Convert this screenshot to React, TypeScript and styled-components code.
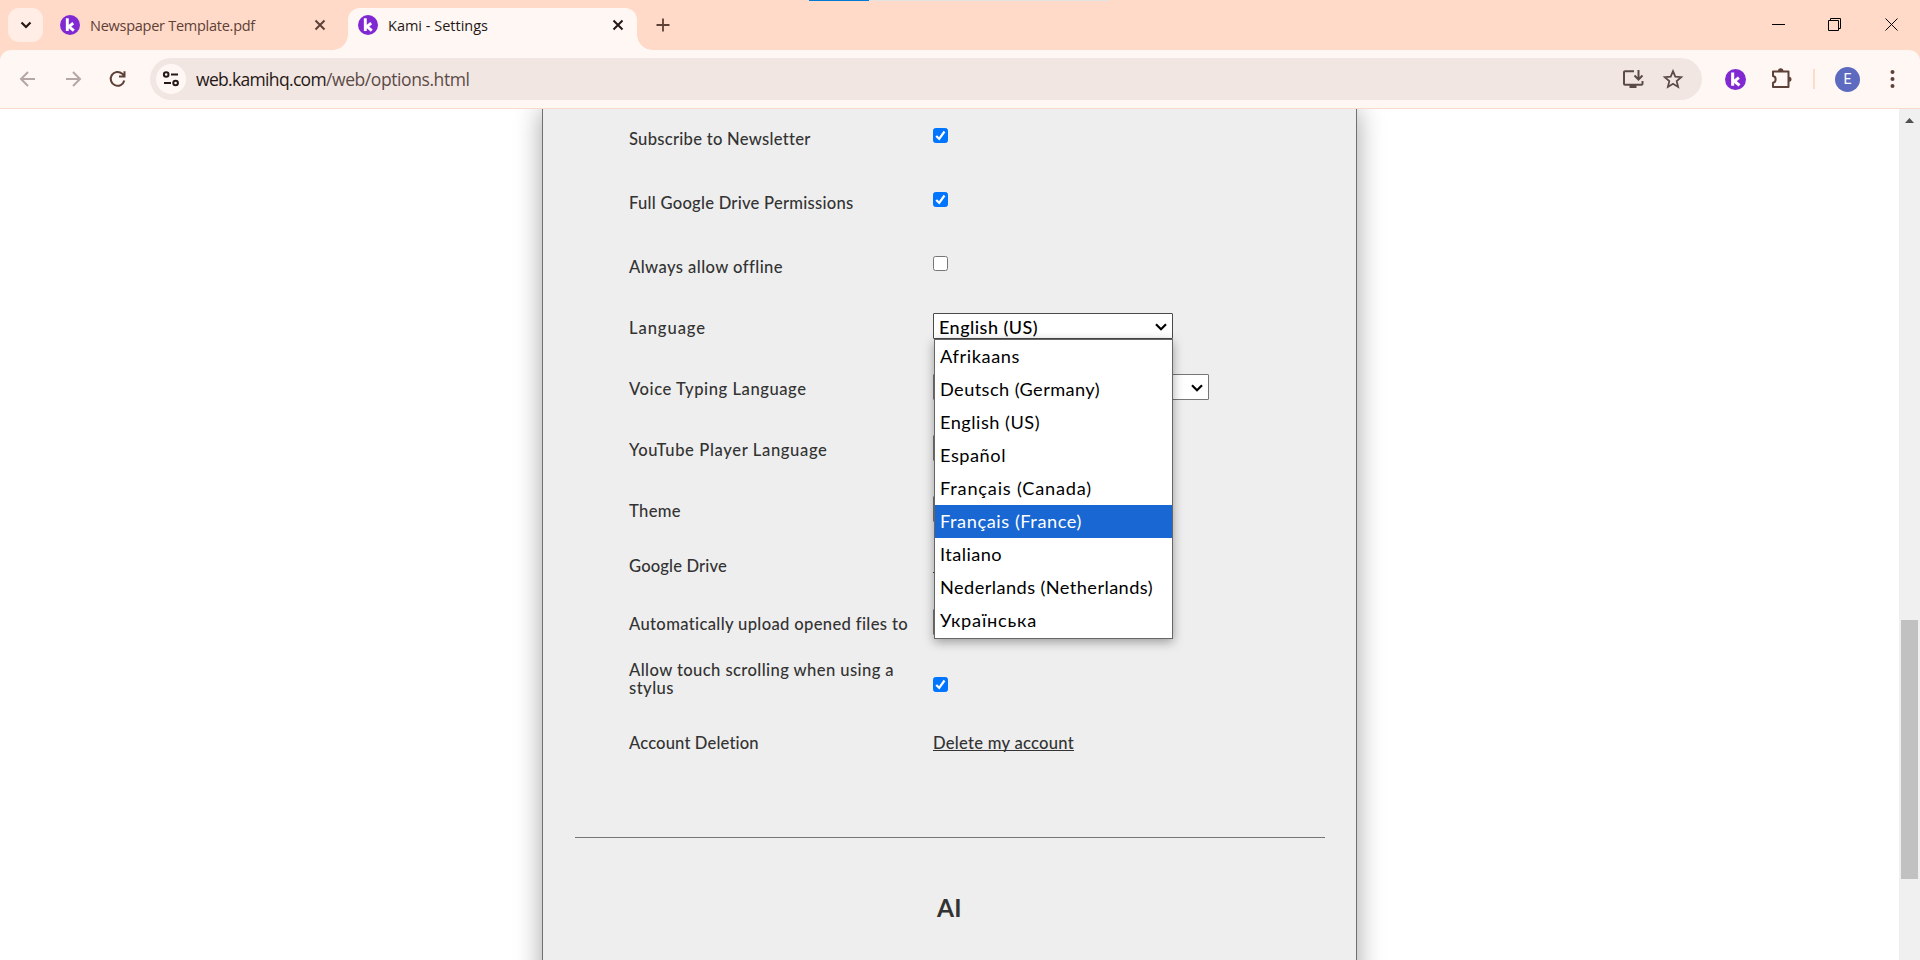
import React, { useLayoutEffect, useRef } from "react";
import styled, { createGlobalStyle, css } from "styled-components";

const uiFont = `"Open Sans", "Noto Sans", sans-serif`;
const pageFont = `Lato, "Open Sans", sans-serif`;

const GlobalStyle = createGlobalStyle`
  * { box-sizing: border-box; }
  body { margin: 0; background: #fff; overflow: hidden; }
  svg { display: block; flex: none; }
`;

const Text = styled.span`
  display: inline-block;
  white-space: pre;
`;

/* Tracks a line of text so that it fills the given width. */
function Fit({ width, children }: { width: number; children: string }) {
  const ref = useRef<HTMLSpanElement>(null);
  useLayoutEffect(() => {
    const apply = () => {
      const el = ref.current;
      if (!el) return;
      el.style.letterSpacing = "0px";
      const natural = el.getBoundingClientRect().width;
      el.style.letterSpacing = `${(width - natural) / children.length}px`;
    };
    apply();
    document.fonts?.ready.then(apply);
  }, [width, children]);
  return <Text ref={ref}>{children}</Text>;
}

const Window = styled.div`
  width: 1920px;
  height: 960px;
  display: flex;
  flex-direction: column;
  overflow: hidden;
  position: relative;
  background: #ffdac8;
`;

const LoadingBar = styled.div`
  position: absolute;
  top: 0;
  left: 809px;
  width: 300px;
  height: 1px;
  background: linear-gradient(to right, #0078d4 60px, #e3e3e3 60px);
`;

const TabStrip = styled.header`
  height: 50px;
  flex: none;
  display: flex;
  align-items: flex-end;
  padding-left: 8px;
  font: 14.5px/20px ${uiFont};
`;

const TabSearch = styled.button`
  width: 35px;
  height: 34px;
  margin: 0 7px 8px 0;
  padding: 0;
  border: 0;
  border-radius: 11px;
  background: #ffede6;
  display: grid;
  place-items: center;
`;

const Tab = styled.div<{ $active?: boolean }>`
  width: ${(p) => (p.$active ? 289 : 298)}px;
  height: 42px;
  display: flex;
  align-items: center;
  padding: 0 ${(p) => (p.$active ? 13 : 22)}px 8px 10px;
  gap: 10px;
  color: #5d4037;
  position: relative;
  ${(p) =>
    p.$active &&
    css`
      background: #fff7f4;
      color: #251815;
      border-radius: 12px 12px 0 0;
      &::before,
      &::after {
        content: "";
        position: absolute;
        bottom: 0;
        width: 15px;
        height: 15px;
      }
      &::before {
        right: 100%;
        background: radial-gradient(circle at 0 0, transparent 14.5px, #fff7f4 15px);
      }
      &::after {
        left: 100%;
        background: radial-gradient(circle at 100% 0, transparent 14.5px, #fff7f4 15px);
      }
    `}
`;

const TabTitle = styled.div`
  flex: 1;
  padding-top: 1px;
`;

const NewTab = styled.div`
  margin: 0 0 18px 18.5px;
`;

const WindowControls = styled.div`
  margin-left: auto;
  display: flex;
  gap: 43px;
  padding: 0 21px 18px 0;
`;

const Toolbar = styled.div`
  height: 59px;
  flex: none;
  display: flex;
  align-items: center;
  background: #fff7f4;
  border-bottom: 1px solid #f8dacd;
  border-radius: 11px 11px 0 0;
`;

const NavButtons = styled.div`
  width: 150px;
  display: flex;
  gap: 20.5px;
  padding-left: 16px;
`;

const Omnibox = styled.div`
  width: 1552px;
  height: 42px;
  border-radius: 21px;
  background: #f2e6e3;
  display: flex;
  align-items: center;
  padding: 0 18px 0 6px;
  font: 17.5px/24px ${uiFont};
  color: #5b4b46;
`;

const SiteInfo = styled.div`
  width: 30px;
  height: 30px;
  border-radius: 50%;
  background: #fff7f4;
  display: grid;
  place-items: center;
  margin-right: 10px;
`;

const Url = styled.div`
  flex: 1;
  display: flex;
`;

const Host = styled.span`
  color: #251815;
`;

const OmniActions = styled.div`
  display: flex;
  gap: 18px;
`;

const Extensions = styled.div`
  display: flex;
  align-items: center;
  padding-left: 23px;
`;

const PuzzleSlot = styled.div`
  margin-left: 23px;
`;

const Separator = styled.div`
  width: 2px;
  height: 20px;
  background: #ffdac8;
  margin: 0 20px;
`;

const Avatar = styled.div`
  width: 25px;
  height: 25px;
  border-radius: 50%;
  background: #5c6bc0;
  color: #fff;
  font: 14px/25px Roboto, sans-serif;
  text-align: center;
`;

const MenuSlot = styled.div`
  margin-left: 20px;
`;

const Viewport = styled.main`
  flex: 1;
  min-height: 0;
  display: flex;
  background: #fff;
`;

const Canvas = styled.div`
  flex: 1;
  overflow: hidden;
  padding-left: 542px;
`;

const Panel = styled.section`
  width: 815px;
  height: 900px;
  background: #eee;
  border: solid #707070;
  border-width: 0 1px;
  box-shadow: 0 0 25px rgba(0, 0, 0, 0.36);
  color: #333;
  font: 500 16.6px/18px ${pageFont};
`;

const Row = styled.div<{ $h: number }>`
  height: ${(p) => p.$h}px;
  display: grid;
  grid-template-columns: 304px 1fr;
  padding-left: 86px;
`;

const Label = styled.div<{ $top: number }>`
  padding-top: ${(p) => p.$top}px;
`;

const Field = styled.div<{ $top: number }>`
  padding-top: ${(p) => p.$top}px;
  position: relative;
`;

const Check = styled.div<{ $on?: boolean }>`
  width: 15px;
  height: 15px;
  border-radius: 2.5px;
  border: 1px solid ${(p) => (p.$on ? "#0075ff" : "#767676")};
  background: ${(p) => (p.$on ? "#0075ff" : "#fff")};
  display: grid;
  place-items: center;
`;

const Select = styled.div<{ $w: number; $focus?: boolean }>`
  width: ${(p) => p.$w}px;
  height: 26px;
  border: 1px solid ${(p) => (p.$focus ? "#4a4a4a" : "#767676")};
  border-radius: 1px;
  background: #fff;
  color: #000;
  display: flex;
  align-items: center;
  justify-content: space-between;
  padding: 1px 5px 0;
  font: 500 18px/24px ${pageFont};
`;

const Menu = styled.ul`
  position: absolute;
  z-index: 2;
  left: 1px;
  top: 100%;
  width: 239px;
  margin: 0;
  padding: 0 0 1px;
  list-style: none;
  background: #fff;
  border: 1px solid #666;
  box-shadow: 0 3px 10px rgba(0, 0, 0, 0.35);
  color: #000;
  font: 400 18.2px/32px ${pageFont};
`;

const Option = styled.li<{ $active?: boolean }>`
  height: 33px;
  padding-left: 5px;
  background: ${(p) => (p.$active ? "#1967d2" : "transparent")};
  color: ${(p) => (p.$active ? "#fff" : "inherit")};
`;

const Anchor = styled.div`
  position: relative;
  width: 240px;
`;

const Link = styled.a`
  display: inline-block;
  height: 17px;
  border-bottom: 1px solid #333;
`;

const Divider = styled.div`
  height: 1px;
  margin: 0 31px 0 32px;
  background: #767676;
`;

const Heading = styled.h2`
  margin: 54px 0 0;
  text-align: center;
  font: 700 24.5px/32px ${pageFont};
`;

const Scrollbar = styled.aside`
  width: 21px;
  background: #f0f0f0;
  display: flex;
  flex-direction: column;
  align-items: center;
  padding-top: 9px;
`;

const Thumb = styled.div`
  width: 17px;
  height: 259px;
  margin-top: 497px;
  background: #c1c1c1;
`;

const KamiLogo = ({ size = 20 }: { size?: number }) => (
  <svg width={size} height={size} viewBox="0 0 20 20">
    <circle cx="10" cy="10" r="10" fill="#8029d2" />
    <path
      d="M7.300 3.300V16M13.200 8.200L9 11.600L13.800 15.600"
      fill="none"
      stroke="#fff"
      strokeWidth="2.900"
    />
  </svg>
);

const Cross = ({ color }: { color: string }) => (
  <svg width="12" height="12" viewBox="0 0 12 12" stroke={color} strokeWidth="2">
    <path d="M1.500 1.500l9 9M10.500 1.500l-9 9" />
  </svg>
);

const Chevron = () => (
  <svg width="12" height="8" viewBox="0 0 12 8" fill="none" stroke="#000" strokeWidth="2.200">
    <path d="M1 1.200l5 5 5-5" />
  </svg>
);

const CheckMark = () => (
  <svg width="13" height="13" viewBox="0 0 13 13" fill="none" stroke="#fff" strokeWidth="2.200">
    <path d="M2.200 7l3 2.900 5.300-7.400" />
  </svg>
);

const Checkbox = ({ on }: { on?: boolean }) => <Check $on={on}>{on && <CheckMark />}</Check>;

const languages: [string, number][] = [
  ["Afrikaans", 80],
  ["Deutsch (Germany)", 160],
  ["English (US)", 100],
  ["Español", 66],
  ["Français (Canada)", 152],
  ["Français (France)", 142],
  ["Italiano", 62],
  ["Nederlands (Netherlands)", 213],
  ["Українська", 97],
];

export default function App() {
  return (
    <Window>
      <GlobalStyle />
      <LoadingBar />
      <TabStrip>
        <TabSearch>
          <svg width="12" height="8" viewBox="0 0 12 8" fill="none" stroke="#251815" strokeWidth="2.200">
            <path d="M1.500 1.500L6 6l4.500-4.500" />
          </svg>
        </TabSearch>
        <Tab>
          <KamiLogo />
          <TabTitle><Fit width={165}>Newspaper Template.pdf</Fit></TabTitle>
          <Cross color="#5d4037" />
        </Tab>
        <Tab $active>
          <KamiLogo />
          <TabTitle><Fit width={100}>Kami - Settings</Fit></TabTitle>
          <Cross color="#251815" />
        </Tab>
        <NewTab>
          <svg width="14" height="14" viewBox="0 0 14 14" stroke="#5d4037" strokeWidth="1.800">
            <path d="M7 .5v13M.5 7h13" />
          </svg>
        </NewTab>
        <WindowControls>
          <svg width="13" height="14" viewBox="0 0 13 14"><path d="M0 6.500h13" stroke="#000" /></svg>
          <svg width="14" height="14" viewBox="0 0 14 14" fill="none" stroke="#000">
            <path d="M.5 2.500h10v10H.5zM2.500 2.500v-2h10v10h-2" />
          </svg>
          <svg width="14" height="14" viewBox="0 0 14 14" stroke="#000"><path d="M.5.5l12 12M12.500.5l-12 12" /></svg>
        </WindowControls>
      </TabStrip>
      <Toolbar>
        <NavButtons>
          <svg width="24" height="24" viewBox="0 0 24 24" fill="none" stroke="#b5a8a4" strokeWidth="2">
            <path d="M19 12H5.500M12 5l-7 7 7 7" />
          </svg>
          <svg width="24" height="24" viewBox="0 0 24 24" fill="none" stroke="#b5a8a4" strokeWidth="2">
            <path d="M5 12h13.500M12 5l7 7-7 7" />
          </svg>
          <svg width="24" height="24" viewBox="0 0 24 24" fill="none" stroke="#5d4037" strokeWidth="2">
            <path d="M19.300 13.500A6.900 6.900 0 1 1 17.200 6.700L19 8.700M19.500 4.200v5.300h-5.500" />
          </svg>
        </NavButtons>
        <Omnibox>
          <SiteInfo>
            <svg width="18" height="16" viewBox="0 0 18 16" fill="none" stroke="#251815" strokeWidth="2">
              <circle cx="4.200" cy="3.500" r="2.300" />
              <circle cx="13.600" cy="12" r="2.300" />
              <path d="M9 3.500h7M2 12h7" />
            </svg>
          </SiteInfo>
          <Url>
            <Host><Fit width={130}>web.kamihq.com</Fit></Host>
            <Fit width={143.5}>/web/options.html</Fit>
          </Url>
          <OmniActions>
            <svg width="22" height="20" viewBox="0 0 22 20" fill="none" stroke="#5b4b46" strokeWidth="2">
              <path d="M12 2.200H3a1 1 0 0 0-1 1v11.500a1 1 0 0 0 1 1h16.500a1 1 0 0 0 1-1V12M16.500 1v9M12.500 6.500l4 4 4-4" />
              <path d="M7.500 17.500h7" strokeWidth="3" />
            </svg>
            <svg width="22" height="20" viewBox="0 0 22 20" fill="none" stroke="#5b4b46" strokeWidth="1.800">
              <path d="M11 2.200l2.300 5.500 5.900.5-4.500 3.900 1.400 5.800-5.100-3.100-5.100 3.100 1.400-5.800-4.500-3.900 5.900-.5z" />
            </svg>
          </OmniActions>
        </Omnibox>
        <Extensions>
          <KamiLogo size={21} />
          <PuzzleSlot>
            <svg width="24" height="24" viewBox="0 0 24 24" fill="none" stroke="#5d4037" strokeWidth="2">
              <path d="M4 4.500h15.500v15.500H4v-4.300c3.500-.2 3.500-6.500 0-6.800z" strokeLinejoin="round" />
              <path d="M9 4a2.700 2.700 0 0 1 5.400 0zM20 9.700a2.500 2.500 0 0 1 0 5z" fill="#5d4037" stroke="none" />
            </svg>
          </PuzzleSlot>
          <Separator />
          <Avatar>E</Avatar>
          <MenuSlot>
            <svg width="24" height="20" viewBox="0 0 24 20" fill="#5d4037">
              <circle cx="12.500" cy="3" r="2" />
              <circle cx="12.500" cy="10" r="2" />
              <circle cx="12.500" cy="17" r="2" />
            </svg>
          </MenuSlot>
        </Extensions>
      </Toolbar>
      <Viewport>
        <Canvas>
          <Panel>
            <Row $h={64}>
              <Label $top={21}><Fit width={181}>Subscribe to Newsletter</Fit></Label>
              <Field $top={19}><Checkbox on /></Field>
            </Row>
            <Row $h={64}>
              <Label $top={21}><Fit width={224.5}>Full Google Drive Permissions</Fit></Label>
              <Field $top={19}><Checkbox on /></Field>
            </Row>
            <Row $h={64}>
              <Label $top={21}><Fit width={153.5}>Always allow offline</Fit></Label>
              <Field $top={18.5}><Checkbox /></Field>
            </Row>
            <Row $h={61}>
              <Label $top={18}><Fit width={77}>Language</Fit></Label>
              <Field $top={12}>
                <Anchor>
                  <Select $w={240} $focus><Fit width={99}>English (US)</Fit><Chevron /></Select>
                  <Menu>
                    {languages.map(([name, width]) => (
                      <Option key={name} $active={name === "Français (France)"}>
                        <Fit width={width}>{name}</Fit>
                      </Option>
                    ))}
                  </Menu>
                </Anchor>
              </Field>
            </Row>
            <Row $h={61}>
              <Label $top={18}><Fit width={177.5}>Voice Typing Language</Fit></Label>
              <Field $top={12}><Select $w={276}><span /><Chevron /></Select></Field>
            </Row>
            <Row $h={61}>
              <Label $top={18}><Fit width={198.5}>YouTube Player Language</Fit></Label>
              <Field $top={12}><Select $w={200} /></Field>
            </Row>
            <Row $h={58}>
              <Label $top={18}><Fit width={52}>Theme</Fit></Label>
              <Field $top={12}><Select $w={200} /></Field>
            </Row>
            <Row $h={55}>
              <Label $top={15}><Fit width={98}>Google Drive</Fit></Label>
              <Field $top={14}><Link as="span"><Fit width={120}>{" "}</Fit></Link></Field>
            </Row>
            <Row $h={55}>
              <Label $top={18}><Fit width={279}>Automatically upload opened files to</Fit></Label>
              <Field $top={12}><Select $w={200} /></Field>
            </Row>
            <Row $h={75}>
              <Label $top={9}>
                <Fit width={265}>Allow touch scrolling when using a</Fit>
                <br />
                <Fit width={45}>stylus</Fit>
              </Label>
              <Field $top={25}><Checkbox on /></Field>
            </Row>
            <Row $h={110}>
              <Label $top={7}><Fit width={130}>Account Deletion</Fit></Label>
              <Field $top={7}><Link><Fit width={141}>Delete my account</Fit></Link></Field>
            </Row>
            <Divider />
            <Heading><Fit width={25}>AI</Fit></Heading>
          </Panel>
        </Canvas>
        <Scrollbar>
          <svg width="9" height="5" viewBox="0 0 9 5"><path d="M0 5L4.500 0 9 5z" fill="#505050" /></svg>
          <Thumb />
        </Scrollbar>
      </Viewport>
    </Window>
  );
}
